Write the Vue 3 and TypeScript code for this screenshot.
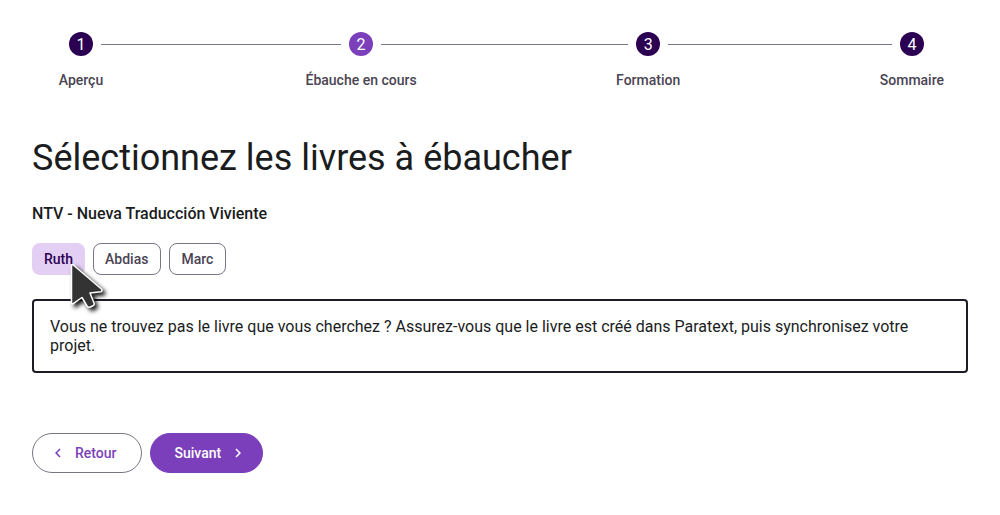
<script setup lang="ts">
import { ref } from 'vue'

interface Step {
  label: string
  current?: boolean
}

const steps: Step[] = [
  { label: 'Aperçu' },
  { label: 'Ébauche en cours', current: true },
  { label: 'Formation' },
  { label: 'Sommaire' },
]

const books = ['Ruth', 'Abdias', 'Marc']
const selected = ref<string[]>(['Ruth'])

function toggle(book: string): void {
  selected.value = selected.value.includes(book)
    ? selected.value.filter((b) => b !== book)
    : [...selected.value, book]
}
</script>

<template>
  <main class="page">
    <ol class="stepper">
      <template v-for="(step, i) in steps" :key="step.label">
        <li v-if="i > 0" class="connector" aria-hidden="true"></li>
        <li class="step" :aria-current="step.current ? 'step' : undefined">
          <div class="track">
            <span class="line" :class="{ hidden: i === 0 }"></span>
            <span class="badge" :class="{ current: step.current }">{{ i + 1 }}</span>
            <span class="line" :class="{ hidden: i === steps.length - 1 }"></span>
          </div>
          <span class="label">{{ step.label }}</span>
        </li>
      </template>
    </ol>

    <h1>Sélectionnez les livres à ébaucher</h1>
    <h2>NTV - Nueva Traducción Viviente</h2>

    <div class="chips" role="group" aria-label="NTV - Nueva Traducción Viviente">
      <button
        v-for="book in books"
        :key="book"
        type="button"
        class="chip"
        :class="{ selected: selected.includes(book) }"
        :aria-pressed="selected.includes(book)"
        @click="toggle(book)"
      >
        {{ book }}
        <svg v-if="book === 'Ruth'" class="pointer" viewBox="0 0 48 56" aria-hidden="true">
          <path
            d="M5.500 5.500V43Q5.500 44.200 6.800 43.800L16 37.500L21 46Q22 48 25 46.800Q28.800 45.300 28.200 43.500L24 33L35 31.800Q36.600 31 35.700 29.300L7 4.800Q6 4.400 5.500 5.500Z"
            fill="#333"
            stroke="#fff"
            stroke-width="1.500"
            stroke-linejoin="round"
          />
        </svg>
      </button>
    </div>

    <p class="notice">
      Vous ne trouvez pas le livre que vous cherchez ? Assurez-vous que le livre est créé dans Paratext, puis
      synchronisez votre projet.
    </p>

    <div class="actions">
      <button type="button" class="action outlined">
        <svg class="icon" viewBox="0 0 24 24" aria-hidden="true">
          <path fill="currentColor" d="M15.410 7.410 14 6l-6 6 6 6 1.410-1.410L10.830 12z" />
        </svg>
        Retour
      </button>
      <button type="button" class="action filled">
        Suivant
        <svg class="icon" viewBox="0 0 24 24" aria-hidden="true">
          <path fill="currentColor" d="M10 6 8.590 7.410 13.170 12l-4.580 4.590L10 18l6-6z" />
        </svg>
      </button>
    </div>
  </main>
</template>

<style>
body {
  margin: 0;
  background: #fff;
}
</style>

<style scoped>
.page {
  padding: 32px;
  color: #1a1c1d;
  font-family: Roboto, sans-serif;
  font-size: 16px;
}

.stepper {
  display: flex;
  margin: 0;
  padding: 0;
  list-style: none;
}

.connector {
  flex: 1;
  height: 1px;
  margin-top: 12px;
  background: #7b7486;
}

.track {
  display: flex;
  align-items: flex-start;
}

.line {
  flex: 1;
  height: 1px;
  margin-top: 12px;
  background: #7b7486;
}

.line.hidden {
  visibility: hidden;
}

.badge {
  width: 24px;
  height: 24px;
  margin: 0 8px;
  border-radius: 50%;
  background: #2b0052;
  color: #fff;
  line-height: 25px;
  text-align: center;
}

.badge.current {
  background: #7b3fbb;
}

.label {
  display: block;
  min-width: 50px;
  padding: 14px 24px 0;
  color: #4a4453;
  font-size: 14px;
  font-weight: 500;
  line-height: 20px;
  text-align: center;
  white-space: nowrap;
}

h1 {
  margin: 46px 0 0;
  font-size: 36px;
  font-weight: 400;
  line-height: 44px;
}

h2 {
  margin: 22px 0 0;
  font-size: 16px;
  font-weight: 500;
  line-height: 24px;
}

.chips {
  display: flex;
  flex-wrap: wrap;
  gap: 8px;
  margin-top: 17px;
}

.chip {
  position: relative;
  height: 32px;
  padding: 0 12px 0 11px;
  border: 1px solid #7b7486;
  border-radius: 8px;
  background: transparent;
  color: #4a4453;
  font: 500 14px/20px Roboto, sans-serif;
  cursor: pointer;
}

.chip.selected {
  padding: 0 12px;
  border: 0;
  background: #e3cff3;
  color: #2b0052;
}

.pointer {
  position: absolute;
  z-index: 1;
  top: 17px;
  left: 34px;
  width: 48px;
  height: 56px;
  filter: drop-shadow(3px 3px 2px rgba(0, 0, 0, 0.9));
  pointer-events: none;
}

.notice {
  margin: 24px 0 0;
  padding: 16px;
  border: 2px solid #1f1b24;
  border-radius: 4px;
  line-height: 19px;
}

.actions {
  display: flex;
  gap: 8px;
  margin-top: 60px;
}

.action {
  display: flex;
  align-items: center;
  gap: 8px;
  height: 40px;
  border: 1px solid #7b7486;
  border-radius: 20px;
  background: transparent;
  font: 500 14px/20px Roboto, sans-serif;
  cursor: pointer;
}

.outlined {
  padding: 0 24px 0 16px;
  color: #7b3fbb;
}

.filled {
  padding: 0 15px 0 24px;
  border-color: #7b3fbb;
  background: #7b3fbb;
  color: #fff;
}

.icon {
  width: 18px;
  height: 18px;
}
</style>
